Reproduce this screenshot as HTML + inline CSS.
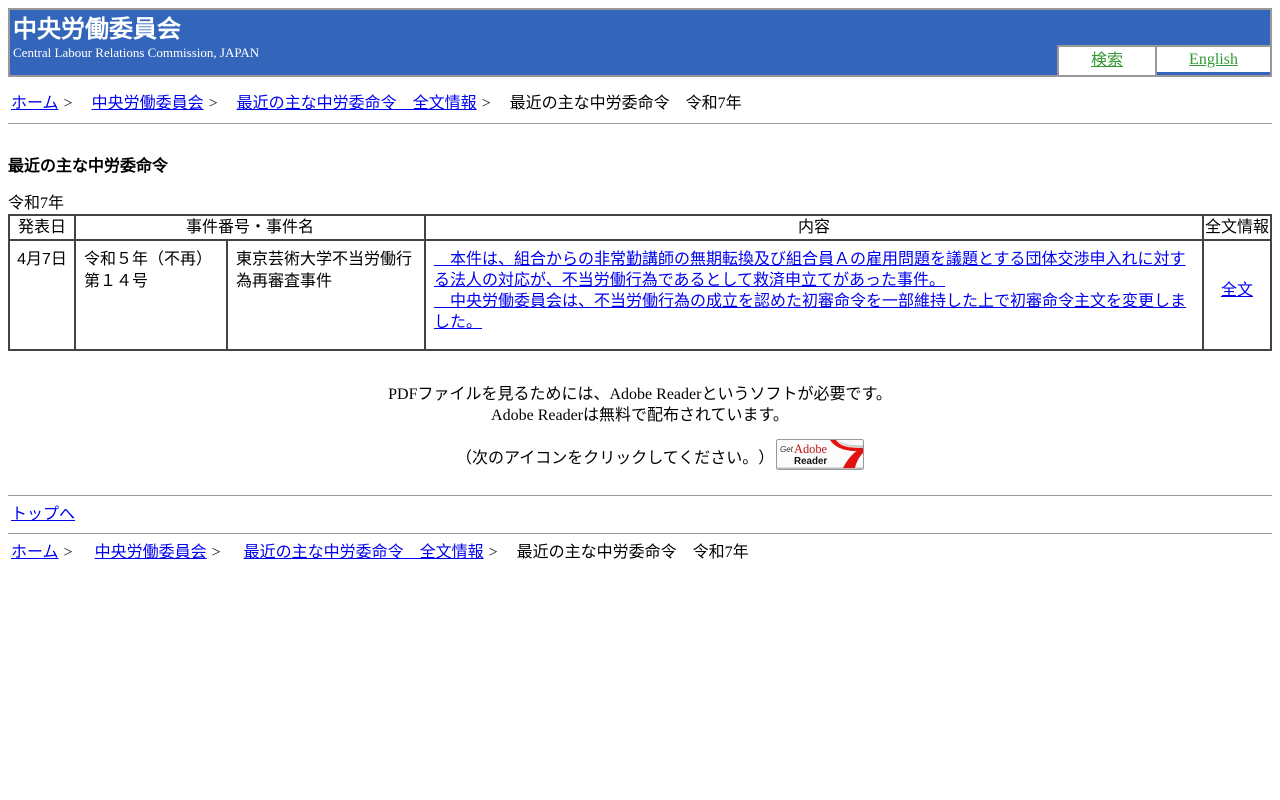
<!DOCTYPE html>
<html>
<head>
<meta charset="utf-8">
<title>最近の主な中労委命令</title>
<style>
html,body{margin:0;padding:0;background:#fff}
body{width:1280px;height:800px;position:relative;overflow:hidden;font-family:"Liberation Serif","WenQuanYi Zen Hei",serif;font-size:16px;line-height:21px;color:#000;text-spacing-trim:space-all}
a{color:#00e}
.abs{position:absolute;white-space:nowrap}
#hd{position:absolute;left:8px;top:8px;width:1260px;height:65px;background:#3366bb;border:2px solid #999}
.tab{position:absolute;background:#fff;text-align:center}
.tab a{color:#339933}
hr{position:absolute;left:8px;width:1264px;height:1px;margin:0;border:0;background:#999}
table{position:absolute;left:8px;top:214px;width:1264px;border-collapse:collapse;table-layout:fixed;font-family:"Liberation Sans","WenQuanYi Zen Hei",sans-serif;font-size:16px;line-height:22px}
td{border:2px solid #444;padding:0;vertical-align:top}
.h td{height:23px;text-align:center;vertical-align:middle}
.b td{height:108px}
.p{padding:8px 8px 0}
.center{position:absolute;left:0;width:1280px;text-align:center;white-space:nowrap}
.g{margin-left:1px}
</style>
</head>
<body>
<div id="hd"></div>
<div class="abs" style="left:13px;top:15px;font-size:24px;line-height:30px;font-weight:bold;color:#fff">中央労働委員会</div>
<div class="abs" style="left:13px;top:45px;font-size:13px;line-height:16px;color:#fff">Central Labour Relations Commission, JAPAN</div>
<div style="position:absolute;left:1057px;top:45px;width:215px;height:32px;background:#999"></div>
<div class="tab" style="left:1059px;top:47px;width:96px;height:28px;line-height:28px"><a href="#">検索</a></div>
<div class="tab" style="left:1157px;top:47px;width:113px;height:28px;line-height:26px;box-shadow:inset 0 -3px 0 #3366bb"><a href="#">English</a></div>

<div class="abs" style="left:11px;top:93px"><a href="#">ホーム</a> <span class="g">&gt;</span><span style="margin-left:19px"><a href="#">中央労働委員会</a></span> <span class="g">&gt;</span><span style="margin-left:19px"><a href="#">最近の主な中労委命令　全文情報</a></span> <span class="g">&gt;</span><span style="margin-left:19px">最近の主な中労委命令　令和7年</span></div>
<hr style="top:123px">

<div class="abs" style="left:8px;top:156px;font-weight:bold">最近の主な中労委命令</div>
<div class="abs" style="left:8px;top:193px">令和7年</div>

<table>
<colgroup><col style="width:66px"><col style="width:152px"><col style="width:198px"><col style="width:778px"><col style="width:68px"></colgroup>
<tr class="h"><td>発表日</td><td colspan="2">事件番号・事件名</td><td>内容</td><td>全文情報</td></tr>
<tr class="b">
<td style="text-align:center"><div style="padding-top:8px">4月7日</div></td>
<td><div class="p">令和５年（不再）<br>第１４号</div></td>
<td><div class="p">東京芸術大学不当労働行為再審査事件</div></td>
<td><div class="p" style="line-height:21px"><a href="#">　本件は、組合からの非常勤講師の無期転換及び組合員Ａの雇用問題を議題とする団体交渉申入れに対する法人の対応が、不当労働行為であるとして救済申立てがあった事件。<br>　中央労働委員会は、不当労働行為の成立を認めた初審命令を一部維持した上で初審命令主文を変更しました。</a></div></td>
<td style="text-align:center;vertical-align:middle"><div style="padding-bottom:8px"><a href="#">全文</a></div></td>
</tr>
</table>

<div class="center" style="top:384px">PDFファイルを見るためには、Adobe Readerというソフトが必要です。</div>
<div class="center" style="top:405px">Adobe Readerは無料で配布されています。</div>
<div class="abs" style="left:456px;top:448px">（次のアイコンをクリックしてください。）</div>

<svg style="position:absolute;left:776px;top:439px" width="88" height="31" viewBox="0 0 88 31">
<rect x="0.5" y="0.5" width="87" height="30" rx="2" fill="#fbfbfb" stroke="#999"/>
<path d="M1 28.5H87V30H1Z" fill="#bbb"/>
<path d="M61 1C67 5 76 7 87 6V9C74 9 65 6 61 1Z" fill="#ccc"/>
<path d="M54 1H60C65 8 74 9 87 9V12C72 13 60 10 54 1Z" fill="#e21212"/>
<path d="M67 29C71 21 76 15 82 11H87V14C83 18 80 24 79 29Z" fill="#e21212"/>
<text x="4" y="13" font-family="Liberation Sans,sans-serif" font-size="8" font-style="italic" fill="#333">Get</text>
<text x="18" y="14" font-family="Liberation Serif,serif" font-size="12.4" fill="#c01818">Adobe</text>
<text x="18" y="25" font-family="Liberation Sans,sans-serif" font-size="9.8" font-weight="bold" fill="#111">Reader</text>
</svg>

<hr style="top:495px">
<div class="abs" style="left:11px;top:504px"><a href="#">トップへ</a></div>
<hr style="top:533px">
<div class="abs" style="left:11px;top:542px"><a href="#">ホーム</a> <span class="g">&gt;</span><span style="margin-left:22px"><a href="#">中央労働委員会</a></span> <span class="g">&gt;</span><span style="margin-left:23px"><a href="#">最近の主な中労委命令　全文情報</a></span> <span class="g">&gt;</span><span style="margin-left:19px">最近の主な中労委命令　令和7年</span></div>
</body>
</html>
